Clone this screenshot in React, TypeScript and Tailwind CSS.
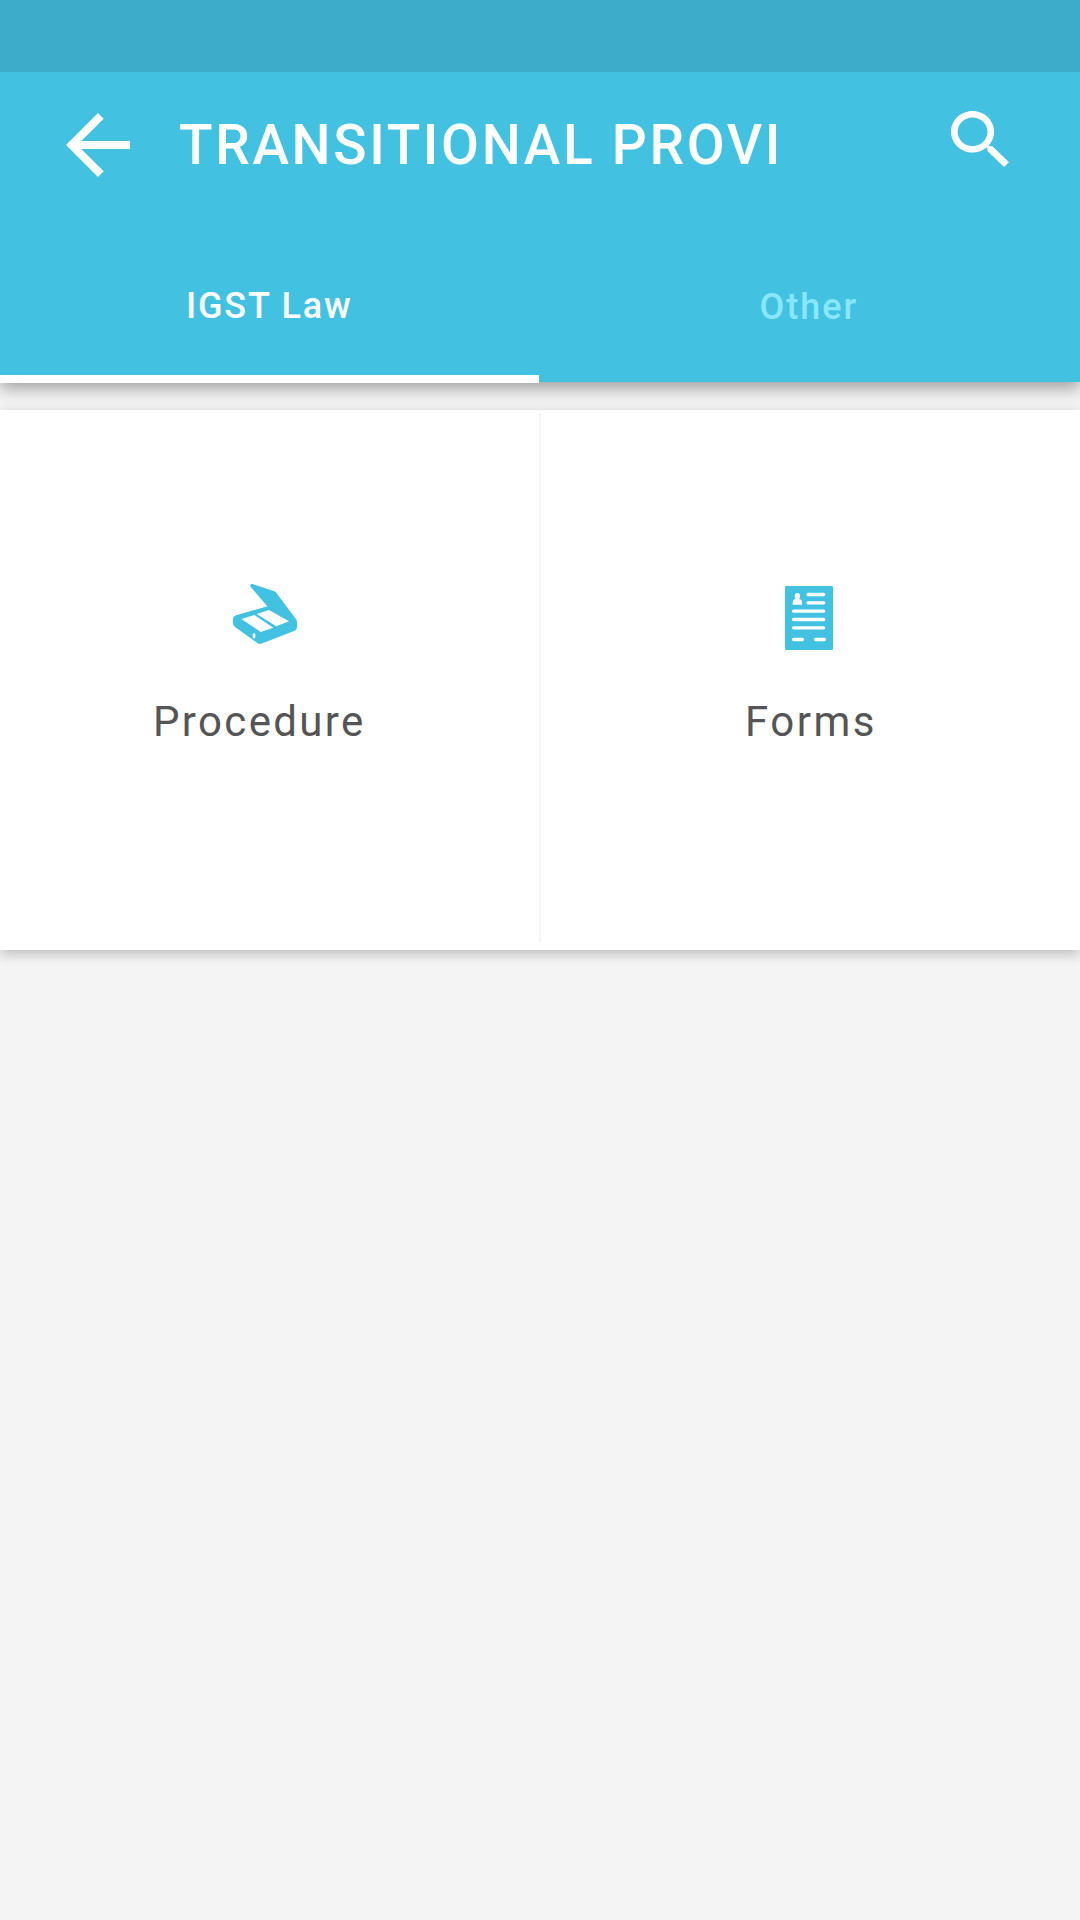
import React from "react";

function BackIcon() {
  return (
    <svg viewBox="4 4 16 16" className="h-16 w-16 shrink-0 fill-white">
      <path d="M20 11H7.83l5.59-5.59L12 4l-8 8 8 8 1.41-1.41L7.83 13H20v-2z" />
    </svg>
  );
}

function SearchIcon() {
  return (
    <svg viewBox="3 3 17.49 17.49" preserveAspectRatio="none" className="h-[56px] w-[58px] shrink-0 fill-white">
      <path d="M15.5 14h-.79l-.28-.27C15.41 12.59 16 11.11 16 9.5 16 5.91 13.09 3 9.5 3S3 5.91 3 9.5 5.91 16 9.5 16c1.61 0 3.09-.59 4.23-1.57l.27.28v.79l5 4.99L20.49 19l-4.99-5zm-6 0C7.01 14 5 11.99 5 9.5S7.01 5 9.5 5 14 7.01 14 9.5 11.99 14 9.5 14z" />
    </svg>
  );
}

function ScannerIcon() {
  return (
    <svg viewBox="39 42 192 180" className="h-[60px] w-16">
      <path
        fill="#43c1e1"
        d="M98 42L163 64Q168 66 171 71L227 146Q231 151 231 158V172Q231 179 224 182L127 220Q118 224 111 218L45 171Q39 166 39 160V148Q39 139 48 136L142 109L93 52Q90 48 91 45Q93 41 98 42Z"
      />
      <path fill="#fff" d="M64 147L103 135L160 173L122 186ZM110 132L147 120L207 154L169 169Z" />
      <ellipse cx="102" cy="197" rx="4.5" ry="8" fill="#fff" />
    </svg>
  );
}

function FormIcon() {
  return (
    <svg viewBox="45 48 144 192" className="h-16 w-12">
      <rect x="45" y="48" width="144" height="192" rx="4" fill="#43c1e1" />
      <path
        fill="#fff"
        d="M82 69C87 69 90 73 90 78C90 81 89 84 87 86C93 88 96 91 96 96V104H68V96C68 91 71 88 77 86C75 84 74 81 74 78C74 73 77 69 82 69Z"
      />
      <g stroke="#fff" strokeWidth="10" strokeLinecap="round">
        <path d="M114 73.500H161M114 98.500H161M71 123.500H161M71 148.500H161M71 173.500H161M71 208.500H97M137 208.500H163" />
      </g>
    </svg>
  );
}

export default function App() {
  return (
    <div className="flex h-[1920px] w-[1080px] flex-col overflow-hidden bg-[#f4f4f4] font-[Roboto,sans-serif]">
      <header className="h-[382px] shrink-0 bg-[#43c1e1] shadow-[0_6px_16px_rgba(0,0,0,0.36)]">
        <div className="h-[72px] bg-[#3dabca]" />
        <div className="flex h-[168px] items-start pr-[71px] pl-[66px]">
          <div className="pt-[41px]">
            <BackIcon />
          </div>
          <h1 className="flex-1 pt-[46px] pl-[49px] text-[55px] leading-[55px] font-medium tracking-[2.66px] whitespace-nowrap text-white">
            TRANSITIONAL PROVI
          </h1>
          <div className="pt-[39px]">
            <SearchIcon />
          </div>
        </div>
        <nav className="grid h-[143px] grid-cols-[539px_541px] text-[36px] leading-[36px] font-medium tracking-[1.8px]">
          <div className="flex flex-col justify-between bg-[#43c1e1] pt-[48px] text-white">
            <span className="pl-[186px]">IGST Law</span>
            <span className="h-2 bg-white" />
          </div>
          <div className="pt-[49px] pl-[220.5px] tracking-[2px] text-[#88e7ff]">Other</div>
        </nav>
      </header>
      <main className="mt-7 grid h-[540px] shrink-0 grid-cols-[539px_2px_539px] bg-white text-[42px] leading-[42px] tracking-[2.35px] text-[#555] shadow-[0_4px_12px_rgba(0,0,0,0.23)]">
        <section className="flex flex-col items-start pt-[174px]">
          <div className="pl-[233px]">
            <ScannerIcon />
          </div>
          <span className="mt-[57px] pl-[153px]">Procedure</span>
        </section>
        <div className="mt-[3px] h-[529px] bg-[#f4f4f4]" />
        <section className="flex flex-col items-start pt-[176px]">
          <div className="pl-[244px]">
            <FormIcon />
          </div>
          <span className="mt-[51px] pl-[204px] tracking-[2.5px]">Forms</span>
        </section>
      </main>
    </div>
  );
}
